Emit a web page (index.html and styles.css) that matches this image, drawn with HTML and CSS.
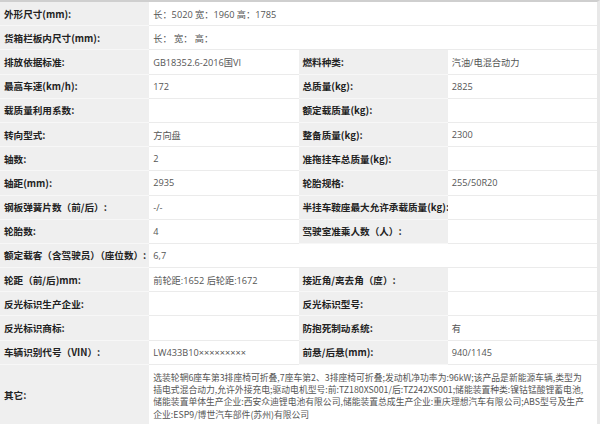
FILE: index.html
```html
<!DOCTYPE html>
<html lang="zh">
<head>
<meta charset="utf-8">
<link rel="stylesheet" href="styles.css">
</head>
<body>
<div class="sheet">
  <div class="lb">外形尺寸(mm):</div><div class="vl span3">长：5020 宽：1960 高：1785</div>
  <div class="lb">货箱栏板内尺寸(mm):</div><div class="vl span3">长：&nbsp;宽：&nbsp;高：</div>
  <div class="lb">排放依据标准:</div><div class="vl">GB18352.6-2016国VI</div>
  <div class="lb">燃料种类:</div><div class="vl">汽油/电混合动力</div>
  <div class="lb">最高车速(km/h):</div><div class="vl">172</div>
  <div class="lb">总质量(kg):</div><div class="vl">2825</div>
  <div class="lb">载质量利用系数:</div><div class="vl"></div>
  <div class="lb">额定载质量(kg):</div><div class="vl"></div>
  <div class="lb">转向型式:</div><div class="vl">方向盘</div>
  <div class="lb">整备质量(kg):</div><div class="vl">2300</div>
  <div class="lb">轴数:</div><div class="vl">2</div>
  <div class="lb">准拖挂车总质量(kg):</div><div class="vl"></div>
  <div class="lb">轴距(mm):</div><div class="vl">2935</div>
  <div class="lb">轮胎规格:</div><div class="vl">255/50R20</div>
  <div class="lb">钢板弹簧片数（前/后）:</div><div class="vl">-/-</div>
  <div class="lb">半挂车鞍座最大允许承载质量(kg):</div><div class="vl"></div>
  <div class="lb">轮胎数:</div><div class="vl">4</div>
  <div class="lb">驾驶室准乘人数（人）:</div><div class="vl"></div>
  <div class="lb">额定载客（含驾驶员）（座位数）:</div><div class="vl span3">6,7</div>
  <div class="lb">轮距（前/后)mm:</div><div class="vl">前轮距:1652 后轮距:1672</div>
  <div class="lb">接近角/离去角（度）:</div><div class="vl"></div>
  <div class="lb">反光标识生产企业:</div><div class="vl"></div>
  <div class="lb">反光标识型号:</div><div class="vl"></div>
  <div class="lb">反光标识商标:</div><div class="vl"></div>
  <div class="lb">防抱死制动系统:</div><div class="vl">有</div>
  <div class="lb">车辆识别代号（VIN）:</div><div class="vl">LW433B10×××××××××</div>
  <div class="lb">前悬/后悬(mm):</div><div class="vl">940/1145</div>
  <div class="lb">其它:</div><div class="vl span3 note">选装轮辋6座车第3排座椅可折叠,7座车第2、3排座椅可折叠;发动机净功率为:96kW;该产品是新能源车辆,类型为插电式混合动力,允许外接充电;驱动电机型号:前:TZ180XS001/后:TZ242XS001;储能装置种类:镍钴锰酸锂蓄电池,储能装置单体生产企业:西安众迪锂电池有限公司,储能装置总成生产企业:重庆理想汽车有限公司;ABS型号及生产企业:ESP9/博世汽车部件(苏州)有限公司</div>
</div>
</body>
</html>
```
FILE: styles.css
```css
html, body {
  margin: 0;
  padding: 0;
  background: #ffffff;
}
.sheet {
  width: 597px;
  border-top: 2px solid #cfcfcf;
  border-right: 3px solid #e8e8e8;
  display: grid;
  grid-template-columns: 149.25px 149.25px 149.25px 149.25px;
  grid-template-rows: repeat(15, 24.2px) auto;
  font-family: "Open Sans", "Noto Sans CJK SC", sans-serif;
}
.lb, .vl {
  box-sizing: border-box;
  display: flex;
  align-items: center;
  padding-left: 4px;
  white-space: nowrap;
  overflow: hidden;
}
.lb {
  background: #efefef;
  border-bottom: 1px solid #f7f7f7;
  font-family: "Noto Sans CJK SC", sans-serif;
  font-weight: 700;
  font-size: 9.6px;
  color: #222;
}
.vl {
  background: #fff;
  border-bottom: 1px solid #ebebeb;
  font-size: 9.2px;
  color: #555;
}
.span3 {
  grid-column: span 3;
}
.note {
  display: block;
  white-space: normal;
  padding: 7px 10px 5px 4px;
  font-family: "Noto Sans CJK SC", sans-serif;
  font-size: 8.8px;
  line-height: 12.3px;
  word-break: break-all;
}
```
